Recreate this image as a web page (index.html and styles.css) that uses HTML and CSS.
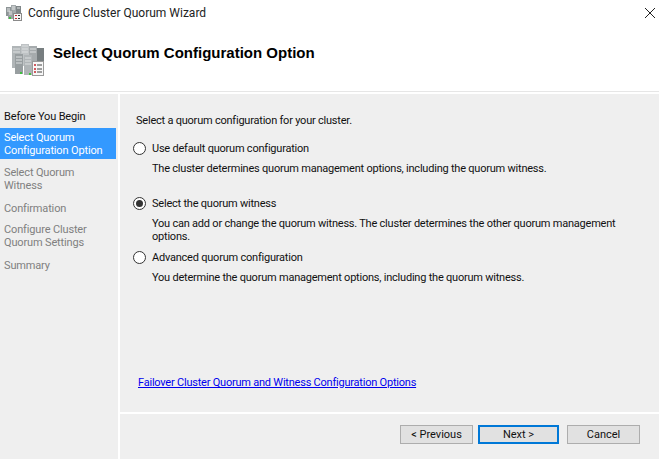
FILE: index.html
```html
<!DOCTYPE html>
<html lang="en">
<head>
  <meta charset="UTF-8">
  <title>Configure Cluster Quorum Wizard</title>
  <link rel="stylesheet" href="styles.css">
</head>
<body>
  <div class="wizard">
    <div class="titlebar">
      <svg class="title-icon" width="16" height="16" viewBox="0 0 16 16">
        <rect x="0" y="2" width="5" height="9" fill="#8d9496"/>
        <rect x="5" y="0" width="5" height="9" fill="#a3a9ab"/>
        <rect x="10" y="1" width="5" height="8" fill="#7f8688"/>
        <rect x="2" y="5" width="5" height="9" fill="#9aa0a2"/>
        <path d="M1 4H4M1 6H4M6 2H9M6 4H9M11 3H14M3 7H6M3 9H6" stroke="#e4e6e6" fill="none"/>
        <rect x="7.500" y="8.500" width="8" height="7" fill="#f4f4f4" stroke="#8a8a8a"/>
        <rect x="3" y="12" width="2" height="2" fill="#3fc23f"/>
        <rect x="9" y="10" width="2" height="1" fill="#c4262e"/>
        <rect x="9" y="13" width="2" height="1" fill="#c4262e"/>
        <rect x="12" y="10" width="2" height="1" fill="#333"/>
        <rect x="12" y="13" width="2" height="1" fill="#333"/>
      </svg>
      <span class="title-text">Configure Cluster Quorum Wizard</span>
      <svg class="close-icon" width="10" height="10" viewBox="0 0 10 10">
        <path d="M0 0L10 10M10 0L0 10" stroke="#222" stroke-width="1" fill="none"/>
      </svg>
    </div>
    <div class="header">
      <svg class="header-icon" width="32" height="32" viewBox="0 0 32 32">
        <rect x="0" y="2" width="9" height="22" fill="#b0b5b7"/>
        <rect x="9" y="0" width="8" height="22" fill="#bfc3c5"/>
        <rect x="17" y="2" width="8" height="22" fill="#a6abad"/>
        <rect x="25" y="4" width="7" height="14" fill="#777e80"/>
        <rect x="3" y="10" width="8" height="20" fill="#989ea0"/>
        <rect x="12" y="11" width="8" height="20" fill="#b0b5b7"/>
        <path d="M1 5H8M1 8H8M10 2H16M10 5H16M10 8H16M18 5H24M18 8H24M4 13H10M4 16H10M4 19H10M13 14H19M13 17H19M13 20H19" stroke="#dcdfe0" fill="none"/>
        <rect x="8" y="28" width="2" height="2" fill="#3fc23f"/>
        <rect x="17" y="29" width="2" height="2" fill="#3fc23f"/>
        <rect x="20.500" y="17.500" width="11" height="14" fill="#f7f7f7" stroke="#9a9a9a"/>
        <path d="M22 21H24M22 25H24M22 28H24" stroke="#c4262e" stroke-width="1.500"/>
        <path d="M25 21H30M25 25H30M25 28H30" stroke="#444" stroke-width="1"/>
      </svg>
      <h1 class="header-title">Select Quorum Configuration Option</h1>
    </div>
    <div class="main">
      <div class="steps">
        <div class="step step-first">Before You Begin</div>
        <div class="step step-active">Select Quorum<br>Configuration Option</div>
        <div class="step step-witness">Select Quorum<br>Witness</div>
        <div class="step step-confirm">Confirmation</div>
        <div class="step">Configure Cluster<br>Quorum Settings</div>
        <div class="step">Summary</div>
      </div>
      <div class="content">
        <div class="options">
          <p class="intro">Select a quorum configuration for your cluster.</p>
          <div class="option option-default">
            <span class="radio"></span>
            <div>
              <div class="option-label">Use default quorum configuration</div>
              <div class="option-desc">The cluster determines quorum management options, including the quorum witness.</div>
            </div>
          </div>
          <div class="option option-witness">
            <span class="radio radio-on"></span>
            <div>
              <div class="option-label">Select the quorum witness</div>
              <div class="option-desc">You can add or change the quorum witness. The cluster determines the other quorum management options.</div>
            </div>
          </div>
          <div class="option">
            <span class="radio"></span>
            <div>
              <div class="option-label">Advanced quorum configuration</div>
              <div class="option-desc">You determine the quorum management options, including the quorum witness.</div>
            </div>
          </div>
          <a class="help-link" href="#">Failover Cluster Quorum and Witness Configuration Options</a>
        </div>
        <div class="buttons">
          <button class="btn btn-prev">&lt; Previous</button>
          <button class="btn btn-next">Next &gt;</button>
          <button class="btn btn-cancel">Cancel</button>
        </div>
      </div>
    </div>
  </div>
</body>
</html>
```

FILE: styles.css
```css
* {
  margin: 0;
  padding: 0;
  box-sizing: border-box;
}
html, body {
  height: 100%;
  overflow: hidden;
}
body {
  background: #fff;
  color: #111;
  font-family: "Roboto", "Liberation Sans", sans-serif;
  font-size: 11px;
}
.wizard {
  display: flex;
  flex-direction: column;
  height: 459px;
}
.titlebar {
  display: flex;
  align-items: center;
  height: 26px;
  padding: 0 4px 0 6px;
}
.title-icon {
  margin-right: 6px;
}
.title-text {
  flex: 1;
  font-size: 12px;
  color: #222;
}
.header {
  display: flex;
  align-items: flex-start;
  height: 66px;
  padding: 18px 0 0 12px;
  border-bottom: 1px solid #e6e6e6;
}
.header-title {
  margin: 0 0 0 9px;
  font-family: "Liberation Sans", sans-serif;
  font-size: 15px;
  line-height: 18px;
  font-weight: bold;
  color: #000;
}
.main {
  flex: 1;
  display: flex;
  padding-top: 2px;
}
.steps {
  width: 118px;
  padding-top: 16px;
  background: #efefef;
  color: #808080;
  letter-spacing: -0.15px;
}
.step {
  padding-left: 4px;
  line-height: 13px;
  margin-bottom: 10px;
  white-space: nowrap;
}
.step-first {
  color: #111;
  margin-bottom: 5px;
}
.step-active {
  width: 116px;
  padding: 3px 0 2px 4px;
  margin-bottom: 7px;
  background: #3399ff;
  color: #fff;
}
.step-confirm {
  margin-bottom: 8px;
}
.content {
  flex: 1;
  display: flex;
  flex-direction: column;
  margin-left: 2px;
  background: #efefef;
}
.options {
  flex: 1;
  padding: 19px 0 0 13px;
  border-bottom: 2px solid #fff;
  letter-spacing: -0.22px;
}
.intro {
  margin-left: 3px;
  line-height: 15px;
  margin-bottom: 13px;
}
.option {
  display: flex;
  align-items: flex-start;
  gap: 6px;
}
.option-default {
  margin-bottom: 21px;
}
.option-witness {
  margin-bottom: 7px;
}
.radio {
  flex: none;
  width: 13px;
  height: 13px;
  margin-top: 1px;
  border: 1px solid #333;
  border-radius: 50%;
  background: #fff;
}
.radio-on {
  position: relative;
}
.radio-on::after {
  content: "";
  position: absolute;
  left: 2px;
  top: 2px;
  width: 7px;
  height: 7px;
  border-radius: 50%;
  background: #333;
}
.option-label {
  line-height: 15px;
  margin-bottom: 6px;
}
.option-desc {
  line-height: 13px;
  width: 480px;
}
.help-link {
  display: block;
  margin: 91px 0 0 5px;
  color: #0000ee;
  line-height: 15px;
}
.buttons {
  display: flex;
  height: 45px;
  padding: 11px 0 0 280px;
}
.btn {
  height: 19px;
  background: #e1e1e1;
  border: 1px solid #adadad;
  color: #111;
  font-family: inherit;
  font-size: 11px;
}
.btn-prev {
  width: 73px;
  margin-right: 5px;
}
.btn-next {
  width: 81px;
  margin-right: 8px;
  border: 2px solid #0078d7;
}
.btn-cancel {
  width: 73px;
}
```
